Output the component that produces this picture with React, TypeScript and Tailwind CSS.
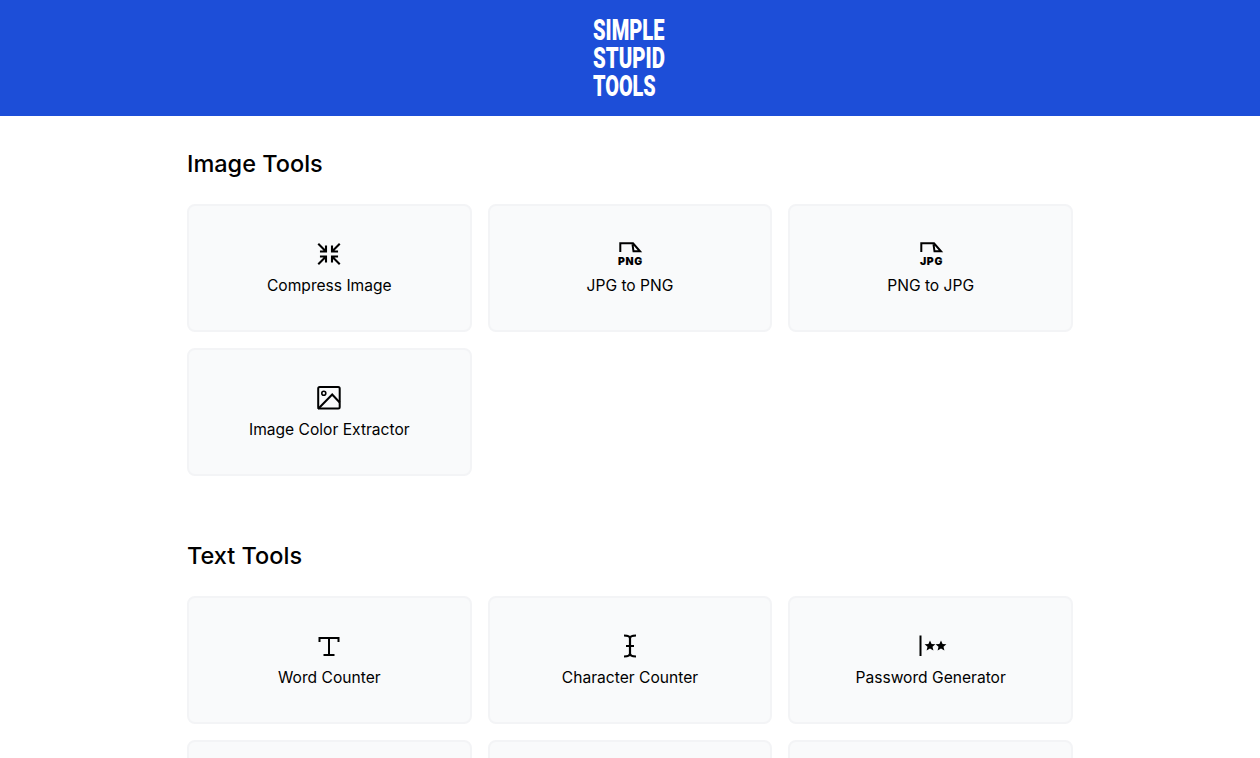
import React from "react";

const S = ({ children }: { children: React.ReactNode }) => (
  <svg width="32" height="24" viewBox="0 0 32 24" fill="none" stroke="currentColor" className="block">
    {children}
  </svg>
);

const Compress = () => (
  <S>
    <g strokeWidth="2.100" strokeLinecap="square">
      <path d="M6 2.500l6.500 6.500M13 4.500V9.500H8" />
      <path d="M26 2.500l-6.500 6.500M19 4.500V9.500h5" />
      <path d="M6 21.500l6.500-6.500M13 19.500V14.500H8" />
      <path d="M26 21.500l-6.500-6.500M19 19.500V14.500h5" />
    </g>
  </S>
);

const FileLabel = ({ label }: { label: string }) => (
  <svg width="32" height="24" viewBox="0 0 32 24" fill="none" className="block overflow-visible">
    <path d="M6.300 10V1.300H19l7 8h-6.500l-1-7" stroke="currentColor" strokeWidth="2" />
    <text x="16.500" y="22.500" textAnchor="middle" fontSize="10.500" fontWeight="900" letterSpacing="0.700" fill="currentColor" fontFamily="Inter, sans-serif">
      {label}
    </text>
  </svg>
);

const ImageIcon = () => (
  <S>
    <rect x="5.200" y="1" width="21.500" height="21.500" rx="1.500" strokeWidth="2" />
    <circle cx="10.800" cy="7.300" r="2" strokeWidth="1.600" />
    <path d="M5 23L19.200 8.500l7.500 8" strokeWidth="2" />
  </S>
);

const TIcon = () => (
  <S>
    <path d="M6.500 8V4h19v4M16 4v17M10.500 21h11" strokeWidth="2" />
  </S>
);

const CursorIcon = () => (
  <S>
    <path d="M10 1.500c3 0 6 .5 6 3v15c0 2.500-3 3-6 3M22 1.500c-3 0-6 .5-6 3v15c0 2.500 3 3 6 3M12 12h8" strokeWidth="2.200" />
  </S>
);

const star = "M0 -5.500L1.600 -2L5.400 -1.700L2.500 .8L3.400 4.600L0 2.600L-3.400 4.600L-2.500 .8L-5.400 -1.700L-1.600 -2Z";

const PasswordIcon = () => (
  <svg width="32" height="24" viewBox="0 0 32 24" fill="currentColor" className="block">
    <rect x="4.500" y="1.500" width="2" height="20.500" />
    <path d={star} transform="translate(15 12)" />
    <path d={star} transform="translate(26 12)" />
  </svg>
);

const Card = ({ icon, label }: { icon?: React.ReactNode; label?: string }) => (
  <div className="flex h-32 flex-col items-center rounded-lg border-2 border-gray-100 bg-gray-50 pt-9">
    <div className="mb-2 h-6">{icon}</div>
    <div className="text-[15.600px] leading-6">{label}</div>
  </div>
);

const Section = ({ title, children }: { title: string; children: React.ReactNode }) => (
  <section className="mb-16">
    <h2 className="mb-6 text-[23.500px] font-medium leading-8">{title}</h2>
    <div className="grid grid-cols-3 gap-4">{children}</div>
  </section>
);

export default function App() {
  return (
    <div className="h-[758px] overflow-hidden bg-white text-black [font-family:Inter,sans-serif]">
      <header className="flex h-[116px] justify-center bg-[#1d4ed8] pt-4 text-white">
        <div className="w-[74px] text-[30px] font-black leading-7 [font-family:Roboto,sans-serif]">
          <div className="origin-left scale-x-[0.67] whitespace-nowrap">SIMPLE</div>
          <div className="origin-left scale-x-[0.68] whitespace-nowrap">STUPID</div>
          <div className="origin-left scale-x-[0.66] whitespace-nowrap">TOOLS</div>
        </div>
      </header>
      <main className="mx-auto w-[886px] pt-8">
        <Section title="Image Tools">
          <Card icon={<Compress />} label="Compress Image" />
          <Card icon={<FileLabel label="PNG" />} label="JPG to PNG" />
          <Card icon={<FileLabel label="JPG" />} label="PNG to JPG" />
          <Card icon={<ImageIcon />} label="Image Color Extractor" />
        </Section>
        <Section title="Text Tools">
          <Card icon={<TIcon />} label="Word Counter" />
          <Card icon={<CursorIcon />} label="Character Counter" />
          <Card icon={<PasswordIcon />} label="Password Generator" />
          <Card />
          <Card />
          <Card />
        </Section>
      </main>
    </div>
  );
}
